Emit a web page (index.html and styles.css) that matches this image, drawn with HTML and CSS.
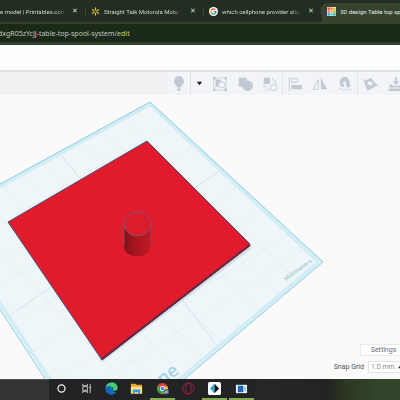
FILE: index.html
```
<!DOCTYPE html>
<html lang="en">
<head>
<meta charset="utf-8">
<title>3D design Table top spool system</title>
<link rel="stylesheet" href="styles.css">
</head>
<body>
<header class="browser">
  <nav class="tabs" aria-label="Browser tabs">
    <div class="tab tab-cut"><a class="tab-title" href="#">e model | Printables.com</a><button class="close" aria-label="Close tab">✕</button></div>
    <div class="tab">
      <svg class="favicon" viewBox="0 0 10 10"><path d="M5 1v2.3M5 6.7V9M1.5 3l2 1.2M6.5 5.8l2 1.2M1.5 7l2-1.2M6.5 4.2l2-1.2" stroke="#f5bb25" stroke-width="1.3" stroke-linecap="round"/></svg>
      <a class="tab-title" href="#">Straight Talk Motorola Moto</a><button class="close" aria-label="Close tab">✕</button>
    </div>
    <div class="tab">
      <svg class="favicon" viewBox="0 0 10 10"><circle cx="5" cy="5" r="5" fill="#fff"/><g fill="none" stroke-width="1.4"><path d="M2.6 3.4A2.9 2.9 0 0 1 7 2.9" stroke="#ea4335"/><path d="M2.6 3.4a2.9 2.9 0 0 0 0 3.2" stroke="#fbbc05"/><path d="M2.6 6.6A2.9 2.9 0 0 0 6.8 7.3" stroke="#34a853"/><path d="M6.8 7.3A2.8 2.8 0 0 0 7.9 5.1H5.2" stroke="#4285f4"/></g></svg>
      <a class="tab-title" href="#">which cellphone provider allo</a><button class="close" aria-label="Close tab">✕</button>
    </div>
    <div class="tab tab-active">
      <svg class="favicon" viewBox="0 0 10 10"><path fill="#fff" d="M0 0h10v10H0z"/><path fill="#e94b3c" d="M.5.5h2.700v2.700H.5z"/><path fill="#f58220" d="M3.700.5h2.700v2.700H3.700z"/><path fill="#f9b233" d="M6.900.5h2.700v2.700H6.900zM3.700 3.700h2.700v2.700H3.700z"/><path fill="#ed6a8b" d="M.5 3.700h2.700v2.700H.5z"/><path fill="#72bf44" d="M6.900 3.700h2.700v2.700H6.900z"/><path fill="#3a9be0" d="M.5 6.900h2.700v2.700H.5z"/><path fill="#45c4e8" d="M3.700 6.900h2.700v2.700H3.700z"/><path fill="#35ae73" d="M6.900 6.900h2.700v2.700H6.900z"/></svg>
      <a class="tab-title" href="#">3D design Table top sp</a>
    </div>
  </nav>
  <div class="address"><input class="url" aria-label="Address" value="dxgR05zYcJj-table-top-spool-system/edit"></div>
</header>
<div class="app-header"></div>
<div class="toolbar" role="toolbar" aria-label="Edit tools">
  <button class="tool" aria-label="Show all"><svg viewBox="0 0 18 18"><path d="M9 0a6 6 0 0 0-3.500 10.500L7 13h4l1.500-2.500A6 6 0 0 0 9 0zM7 14h4v1.500L10 17H8l-1-1.500z"/></svg></button>
  <button class="tool caret rule" aria-label="Visibility options"><svg viewBox="0 0 8 8"><path d="M1 2h6L4 6z"/></svg></button>
  <button class="tool" aria-label="Group"><svg viewBox="0 0 18 18"><path class="line" d="M2 2h14v14H2z" stroke-dasharray="3 1"/><path d="M1 1h3v3H1zM14 1h3v3h-3zM1 14h3v3H1zM14 14h3v3h-3zM4 4h6v3a4 4 0 0 0-3 5H4z"/><circle class="line" cx="11" cy="10" r="3.500"/></svg></button>
  <button class="tool" aria-label="Union"><svg viewBox="0 0 18 18"><path d="M2 2h9v3a6 6 0 1 1-5 7H2z"/></svg></button>
  <button class="tool" aria-label="Ungroup"><svg viewBox="0 0 18 18"><path d="M2 2h7v7H2z"/><circle class="line" cx="13" cy="13" r="3.500"/><path class="line" d="M12 2v3M13 7l3-3M14 8h3M1 12h3M3 17l3-3M8 14v3"/></svg></button>
  <button class="tool rule" aria-label="Align"><svg viewBox="0 0 18 18"><path d="M2 1h1v16H2zM5 10h12v5H5z"/><path class="line" d="M5 3h7v4H5z"/></svg></button>
  <button class="tool" aria-label="Mirror"><svg viewBox="0 0 18 18"><path d="M10 2l7 13h-7z"/><path class="line" d="M7 4v11H1z"/></svg></button>
  <button class="tool" aria-label="Cruise"><svg viewBox="0 0 18 18"><path d="M4 12L3 7a5 5 0 0 1 11-1l1 6-4 1-1-6c-1-2-3-1-3 1l1 4z"/><path class="line" d="M1 15l3-1 3 2 4-1 3 1 3-2" stroke-dasharray="2 1"/></svg></button>
  <button class="tool rule" aria-label="Workplane"><svg viewBox="0 0 18 18"><path d="M1 3l3 2 6-3 4 5 4 3-12 7zM7 6l-1 3 4 2 3-3z" fill-rule="evenodd"/></svg></button>
  <button class="tool" aria-label="Import"><svg viewBox="0 0 18 18"><path d="M8 1h2v5h3l-4 4-4-4h3zM3 9l3 2h6l3-2 3 4H1zM1 14h16v3H1z"/></svg></button>
</div>
<main class="workspace">
  <svg class="scene" viewBox="0 95 400 284" preserveAspectRatio="xMinYMin slice" role="img" aria-label="Red plate with a cylinder on the workplane">
    <defs>
      <clipPath id="plane"><path d="M150 102L323 262 130 425 75 425-60 217z"/></clipPath>
      <linearGradient id="side"><stop stop-color="#7e1219"/><stop offset=".45" stop-color="#a9151f"/><stop offset="1" stop-color="#c41824"/></linearGradient>
    </defs>
    <g clip-path="url(#plane)">
      <path class="plane" d="M150 102L323 262 130 425 75 425-60 217z"/>
      <g class="grid">
        <path d="M-40 206L150 410M-20 195l190 204M0 184l190 200M20 173l190 192M40 162l190 188M80 140l190 180M100 129l190 176M120 118l180 165"/>
        <path d="M178 120L-30 242M202 142L-30 282M246 182L-10 337M270 205L10 365M296 230L30 395M311 245L50 415M-10 292L160 182"/>
      </g>
      <path class="grid-main" d="M60 154L184 302 250 390M221 170L9 316"/>
      <path class="rim" d="M150 104L319 262 130 421 76 420-56 217z"/>
    </g>
    <path class="outline" d="M150 102L323 262 130 425 75 425-60 217z"/>
    <text class="units" transform="translate(286 281) rotate(-36)">Millimeters</text>
    <text class="plane-name" text-anchor="end" transform="translate(180 373) rotate(-36)">Workplane</text>
    <path class="shadow" d="M101 361L251 247"/>
    <path class="plate" d="M147 141L250 244 249 246 102 360 8 222z"/>
    <path class="plate-edge" d="M250 245L102 359"/>
    <path d="M124 224v23a13 9 0 0 0 27 0v-23z" fill="url(#side)"/>
    <path class="cylinder-edge" d="M124 224v22M151 224v22"/>
    <ellipse class="cylinder-top" cx="137.500" cy="224" rx="13.500" ry="12"/>
  </svg>
  <div class="controls">
    <button class="settings">Settings</button>
    <div class="snap"><label for="grid">Snap Grid</label><div class="pick"><select id="grid"><option>1.0 mm</option></select><svg class="up" viewBox="0 0 3 4"><path d="M0 4l3-4v4z"/></svg></div></div>
  </div>
</main>
<footer class="taskbar">
  <div class="search"></div>
  <button class="task" aria-label="Cortana"><svg viewBox="0 0 14 14"><circle cx="7" cy="7" r="3.800" fill="none" stroke="#eee" stroke-width="1.400"/></svg></button>
  <button class="task" aria-label="Task view"><svg viewBox="0 0 14 14"><path d="M3 2v2h5V2M3 12v-2h5v2M3 5h5v4H3zM11 2v10M10 6h2" fill="none" stroke="#ccc"/></svg></button>
  <button class="task" aria-label="Edge"><svg viewBox="0 0 14 14"><circle cx="7" cy="7" r="6.500" fill="#1688d8"/><path d="M1 5C3-1 13-1 13.500 6c0 3-3 4-5 3 2-4-4-6-7.500-4z" fill="#4cca72"/><path d="M1 6c3-2 6-1 6 1-1 3 2 5 5 4-3 4-10 3-11-2z" fill="#1269bd"/><path d="M8 6c2 2-1 2 1 3.500 2 .5 4-.5 4.500-2L13 11c-3 1-6-1-5-5z" fill="#202326"/></svg></button>
  <button class="task" aria-label="File Explorer"><svg viewBox="0 0 14 14"><path d="M1 2h5l1 1h6v10H1z" fill="#e8a928"/><path d="M1 5h12v7H1z" fill="#ffe08a"/><path d="M3 8h8v5H9v-2H5v2H3z" fill="#3c9bdc"/></svg></button>
  <button class="task running" aria-label="Chrome"><svg viewBox="0 0 14 14"><circle cx="7" cy="7" r="6" fill="#e4483b"/><path d="M2 4a6 6 0 0 0 5 9l2-5H5z" fill="#35a853"/><path d="M7 13a6 6 0 0 0 5.500-8H8l1 4z" fill="#fbc116"/><circle cx="7" cy="7" r="2.800" fill="#fff"/><circle cx="7" cy="7" r="2" fill="#4285f4"/><circle cx="11" cy="10.500" r="3" fill="#496b82"/><path d="M9 12l2-3 2 2" fill="#bdd3dd"/></svg></button>
  <button class="task" aria-label="Opera"><svg viewBox="0 0 14 14"><g fill="none" stroke="#b51c43"><circle cx="7" cy="7" r="6"/><ellipse cx="7" cy="7" rx="3" ry="5.500"/></g></svg></button>
  <button class="task running" aria-label="Slicer"><svg viewBox="0 0 14 14"><rect x="0" y="0" width="14" height="14" rx="2" fill="#fff"/><path d="M7 2v10L2 7z" fill="#27a7d8"/><path d="M7 2l5 5-5 5z" fill="#111"/></svg></button>
  <button class="task running" aria-label="Window"><svg viewBox="0 0 14 14"><path d="M1 3h12v9H1z" fill="#eef4f8"/><path d="M3 4h6v7H3z" fill="#1e68b6"/><path d="M10 5h2v5h-2z" fill="#a7c4dc"/></svg></button>
  <div class="tray"></div>
</footer>
</body>
</html>
```
FILE: styles.css
```
* { box-sizing: border-box; }
body {
  margin: 0;
  height: 100vh;
  display: flex;
  flex-direction: column;
  overflow: hidden;
  background: #fafafb;
  font-family: "Open Sans", "Noto Sans", sans-serif;
}
button, input, select {
  margin: 0;
  padding: 0;
  border: 0;
  background: none;
  font: inherit;
  color: inherit;
}
a { color: inherit; text-decoration: none; }
.browser { background: #222e21; color: #d0d6cd; }
.tabs { display: flex; height: 22px; }
.tab {
  flex: 0 0 118px;
  min-width: 0;
  display: flex;
  align-items: center;
  gap: 4px;
  height: 22px;
  padding: 0 6px 0 5px;
  font-family: Roboto, sans-serif;
  font-size: 6px;
  background: linear-gradient(#3c463a, #3c463a) right / 1px 8px no-repeat;
}
.tab-cut { flex-basis: 86px; padding-left: 0; }
.tab-title {
  flex: 1;
  min-width: 0;
  overflow: hidden;
  white-space: nowrap;
  mask-image: linear-gradient(90deg, #000 85%, transparent);
}
.close { flex: 0 0 10px; font-size: 7px; color: #d4d8d1; }
.favicon { flex: none; width: 9px; height: 9px; }
.tab-active {
  flex: 1;
  align-self: flex-end;
  height: 19px;
  padding: 0 0 2px 5px;
  border-radius: 5px 0 0 0;
  background: #35432f;
  color: #e6eae4;
}
.tab-active .tab-title { mask-image: none; }
.address {
  height: 23px;
  border: solid #35432f;
  border-width: 2px 0 3px;
  background: #1b2919;
}
.url {
  display: block;
  width: 100%;
  height: 18px;
  text-indent: -2px;
  font-family: "Noto Sans", sans-serif;
  font-size: 7px;
  color: #c0c8bc;
}
.app-header { height: 25px; background: #fdfdfe; }
.toolbar {
  display: flex;
  height: 25px;
  padding-left: 167px;
  overflow: hidden;
  background: #f1f1f4;
  border-top: 2px solid #e0e1e3;
}
.tool {
  flex: 0 0 25px;
  display: flex;
  align-items: center;
  justify-content: center;
  fill: #c1c9d3;
  background: #f2f4f7;
}
.tool svg { flex: none; width: 16px; height: 16px; }
.tool:first-child { flex-basis: 23px; }
.line { fill: none; stroke: #c1c9d3; stroke-width: 1; }
.rule { border-left: 1px solid #e0e4e9; }
.tool:last-child {
  flex: 1 1 0;
  min-width: 0;
  justify-content: flex-start;
  padding-left: 6px;
  overflow: hidden;
}
.caret { flex-basis: 17px; fill: #111; }
.caret svg { width: 7px; height: 7px; }
.workspace { position: relative; flex: 1; min-height: 0; overflow: hidden; }
.scene { display: block; width: 100%; height: 100%; }
.plane { fill: #eef6f9; }
.grid { fill: none; stroke: #e5f0f4; stroke-width: 1; }
.grid-main { fill: none; stroke: #d3e4ea; stroke-width: 1; }
.rim { fill: none; stroke: #d3edf5; stroke-width: 4; }
.outline { fill: none; stroke: #8acae2; stroke-width: 1; }
.units { font-size: 6px; font-weight: 600; fill: #9fc6ce; }
.plane-name { font-size: 18px; font-weight: 600; fill: #a5d4e6; }
.shadow { stroke: #d4dde4; stroke-width: 3; }
.plate { fill: #e01b2b; stroke: #464d78; stroke-width: 1; }
.plate-edge { stroke: #632845; stroke-width: 2; }
.cylinder-top { fill: #dc1b2b; stroke: #83506d; stroke-width: 1; }
.cylinder-edge { stroke: #76506d; stroke-width: 1; }
.controls {
  position: absolute;
  right: 0;
  bottom: 6px;
  display: flex;
  flex-direction: column;
  align-items: flex-end;
  gap: 5px;
  font-family: Roboto, sans-serif;
  font-size: 7px;
  color: #6b6f76;
}
.settings {
  width: 40px;
  height: 12px;
  padding-left: 6px;
  border: 1px solid #e9eaed;
  border-right: 0;
  background: #fff;
}
.snap { display: flex; align-items: center; gap: 4px; height: 12px; }
.snap label { color: #50545a; }
.pick {
  display: flex;
  align-items: center;
  width: 32px;
  height: 12px;
  padding-left: 2px;
  border: 1px solid #e2e4e7;
  border-right: 0;
  background: #fff;
}
.pick select {
  flex: 1;
  min-width: 0;
  height: 10px;
  appearance: none;
  color: #888c92;
}
.up { flex: none; width: 2px; height: 4px; fill: #222; }
.taskbar { display: flex; height: 21px; background: #222324; }
.search { flex: 0 0 49px; background: #333435; border-top: 1px solid #505152; }
.task {
  flex: 0 0 25px;
  display: flex;
  align-items: center;
  justify-content: center;
  border-bottom: 2px solid transparent;
}
.task svg { width: 13px; height: 13px; }
.running { flex-basis: 27px; border-image: linear-gradient(90deg, transparent 12%, #86ad50 12%, #86ad50 88%, transparent 88%) 2; }
.tray { flex: 1; background: linear-gradient(90deg, #262726, #222322 50%, #2b3722 62%, #33452b 85%); }
```
